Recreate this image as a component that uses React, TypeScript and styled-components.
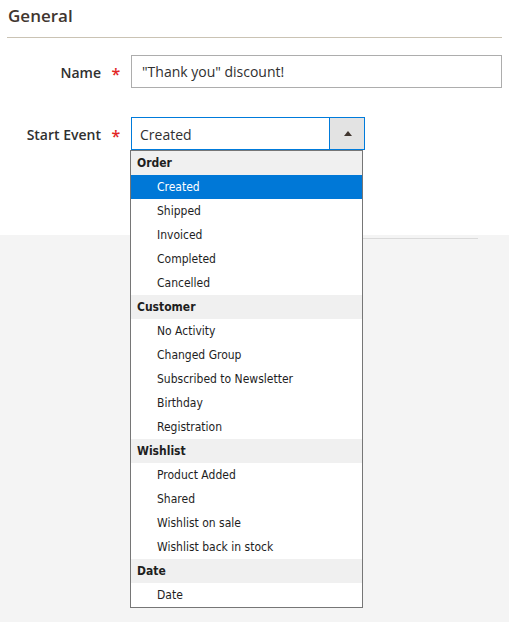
import React from 'react';
import styled, { createGlobalStyle } from 'styled-components';

const GlobalStyle = createGlobalStyle`
  html, body {
    margin: 0;
    padding: 0;
    background: #f4f4f4;
  }
  body {
    font-family: 'Open Sans', 'Noto Sans', sans-serif;
    color: #303030;
  }
`;

const Page = styled.div`
  position: relative;
  width: 509px;
  height: 622px;
  background: #f4f4f4;
`;

const Panel = styled.section`
  background: #ffffff;
  height: 235px;
  padding: 0 7px;
  box-sizing: border-box;
`;

const Title = styled.h2`
  margin: 0;
  padding: 5px 0 11px 1px;
  font-size: 17px;
  line-height: 21px;
  font-weight: 600;
  color: #41362f;
  border-bottom: 1px solid #cac3b4;
`;

const Form = styled.div`
  display: flex;
  flex-direction: column;
  gap: 29px;
  padding-top: 17px;
`;

const Row = styled.div`
  display: grid;
  grid-template-columns: 94px 30px 1fr;
  align-items: center;
`;

const Label = styled.label`
  text-align: right;
  font-size: 14px;
  font-weight: 600;
  color: #303030;
  padding-top: 2px;
`;

const Required = styled.span`
  text-align: center;
  color: #e22626;
  font-size: 16px;
  font-weight: 600;
  padding-top: 4px;
`;

const TextInput = styled.div`
  height: 33px;
  box-sizing: border-box;
  border: 1px solid #adadad;
  padding: 0 10px;
  display: flex;
  align-items: center;
  font-size: 14px;
  color: #303030;
  background: #fff;
`;

const SelectWrap = styled.div`
  position: relative;
  width: 234px;
`;

const SelectBox = styled.div`
  display: flex;
  height: 33px;
  box-sizing: border-box;
  border: 1px solid #007bdb;
  background: #fff;
`;

const SelectValue = styled.div`
  flex: 1;
  display: flex;
  align-items: center;
  padding-left: 8px;
  padding-top: 1px;
  font-size: 14px;
  color: #303030;
`;

const SelectButton = styled.div`
  width: 34px;
  border-left: 1px solid #007bdb;
  background: #e3e3e3;
  display: flex;
  align-items: center;
  justify-content: center;
`;

const Arrow = styled.span`
  width: 0;
  height: 0;
  border-left: 4px solid transparent;
  border-right: 4px solid transparent;
  border-bottom: 5px solid #41362f;
  margin-left: 1px;
`;

const ListBox = styled.ul`
  position: absolute;
  top: 33px;
  left: -1px;
  width: 233px;
  box-sizing: border-box;
  margin: 0;
  padding: 0;
  list-style: none;
  border: 1px solid #767676;
  background: #fff;
  z-index: 10;
  font-family: 'DejaVu Sans Condensed', 'DejaVu Sans', sans-serif;
  font-size: 12px;
`;

const Item = styled.li<{ $group?: boolean; $active?: boolean }>`
  height: 24px;
  line-height: 24px;
  padding-left: ${(p) => (p.$group ? '6px' : '26px')};
  font-weight: ${(p) => (p.$group ? 700 : 400)};
  background: ${(p) => (p.$active ? '#0078d7' : p.$group ? '#f0f0f0' : '#fff')};
  color: ${(p) => (p.$active ? '#fff' : '#1e1e1e')};
  white-space: nowrap;
`;

const Divider = styled.div`
  margin: 3px 31px 0 131px;
  border-top: 1px solid #dadada;
`;

const groups = [
  { name: 'Order', items: ['Created', 'Shipped', 'Invoiced', 'Completed', 'Cancelled'] },
  {
    name: 'Customer',
    items: ['No Activity', 'Changed Group', 'Subscribed to Newsletter', 'Birthday', 'Registration'],
  },
  { name: 'Wishlist', items: ['Product Added', 'Shared', 'Wishlist on sale', 'Wishlist back in stock'] },
  { name: 'Date', items: ['Date'] },
];

const App: React.FC = () => {
  const selected = 'Created';

  return (
    <>
      <GlobalStyle />
      <Page>
        <Panel>
          <Title>General</Title>
          <Form>
            <Row>
              <Label>Name</Label>
              <Required>*</Required>
              <TextInput>"Thank you" discount!</TextInput>
            </Row>
            <Row>
              <Label>Start Event</Label>
              <Required>*</Required>
              <SelectWrap>
                <SelectBox>
                  <SelectValue>{selected}</SelectValue>
                  <SelectButton>
                    <Arrow />
                  </SelectButton>
                </SelectBox>
                <ListBox>
                  {groups.map((g) => (
                    <React.Fragment key={g.name}>
                      <Item $group>{g.name}</Item>
                      {g.items.map((it) => (
                        <Item key={g.name + it} $active={g.name === 'Order' && it === selected}>
                          {it}
                        </Item>
                      ))}
                    </React.Fragment>
                  ))}
                </ListBox>
              </SelectWrap>
            </Row>
          </Form>
        </Panel>
        <Divider />
      </Page>
    </>
  );
};

export default App;
